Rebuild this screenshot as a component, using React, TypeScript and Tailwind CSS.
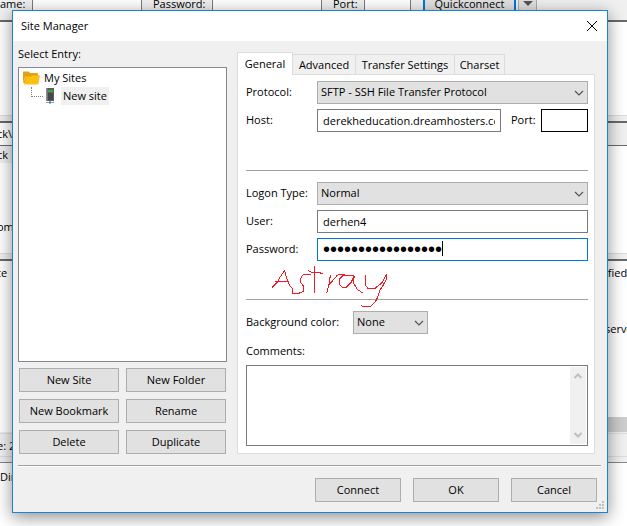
import React, { useState } from "react";

const FONT = "font-['Open_Sans','Noto_Sans',sans-serif]";

const BUTTON =
  "flex h-6 items-center justify-center border border-[#adadad] bg-[#e1e1e1] text-center text-black hover:border-[#0078d7] hover:bg-[#e5f1fb]";

function PushButton({ label }: { label: string }) {
  return (
    <button type="button" className={`${BUTTON} w-full`}>
      {label}
    </button>
  );
}

function Dropdown({ id, options }: { id: string; options: string[] }) {
  return (
    <div className="relative w-full">
      <select
        id={id}
        defaultValue={options[0]}
        className="block h-[23px] w-full appearance-none border border-[#adadad] bg-[#e1e1e1] pr-6 pl-[3px] text-black outline-none"
      >
        {options.map((option) => (
          <option key={option}>{option}</option>
        ))}
      </select>
      <svg
        className="pointer-events-none absolute top-2 right-1 h-2 w-2.5"
        viewBox="0 0 10 8"
        fill="none"
        stroke="#555"
        strokeWidth="1.2"
      >
        <path d="M1 2l4 4 4-4" />
      </svg>
    </div>
  );
}

function Row({
  id,
  label,
  children,
}: {
  id: string;
  label: string;
  children: React.ReactNode;
}) {
  return (
    <div className="flex items-center">
      <label htmlFor={id} className="w-[71px] shrink-0">
        {label}
      </label>
      {children}
    </div>
  );
}

function FolderIcon() {
  return (
    <svg width="17" height="14" viewBox="0 0 17 14">
      <path d="M0 1.5Q0 0.5 1 0.5h4.5l1.5 1.5h7q1 0 1 1V12H0z" fill="#e2a210" />
      <path d="M1 13.5L3.6 5.5H8l1-1h8L15.5 12.5q-.3 1-1.3 1z" fill="#fdc010" />
      <path d="M0 12l2.6-6.5" stroke="#fbe3a0" strokeWidth=".6" />
    </svg>
  );
}

function ServerIcon() {
  return (
    <svg width="10" height="16" viewBox="0 0 10 16">
      <rect x="1" y="0" width="8" height="13" fill="#5c5c5c" />
      <rect x="1" y="0" width="1.5" height="13" fill="#8c8c8c" />
      <rect x="3" y="2" width="5" height="2" fill="#2fae3a" />
      <rect x="3" y="5" width="5" height="7" fill="#484848" />
      <path d="M5 13v2M1 14.5h8" stroke="#9a9a9a" />
      <rect x="4" y="13.5" width="2" height="2" fill="#2f86d8" />
    </svg>
  );
}

function MainWindow() {
  return (
    <div className="flex min-h-screen flex-col bg-white" aria-hidden="true">
      <div className="flex h-5 bg-[#f0f0f0] leading-[7px]">
        <span className="w-8">ame:</span>
        <div className="w-[110px] border-x border-[#7a7a7a] bg-white" />
        <span className="w-[70px] pl-[11px]">Password:</span>
        <div className="w-[110px] border-x border-[#7a7a7a] bg-white" />
        <span className="w-[42px] pl-[11px]">Port:</span>
        <div className="w-[47px] border-x border-[#7a7a7a] bg-white" />
        <div className="ml-3 w-[93px] border-x-2 border-[#0078d7] bg-[#e1e1e1] text-center">
          Quickconnect
        </div>
        <div className="ml-0.5 flex w-[19px] justify-center border-x border-[#adadad] bg-[#e1e1e1]">
          <svg width="10" height="6" viewBox="0 0 10 6">
            <path d="M0 1h10L5 6z" fill="#555" />
          </svg>
        </div>
      </div>
      <div className="h-[95px] border-t-2 border-[#696969]" />
      <div className="h-1.5 border-t border-[#dcdcdc] bg-[#f0f0f0]" />
      <div className="flex h-[25px] border-y border-t-2 border-[#696969]">
        <div className="w-1/2 -indent-[3px] leading-[22px]">ck\</div>
        <div className="w-1/2 bg-[#f0f0f0]" />
      </div>
      <div className="h-[107px] -indent-[3px]">
        <div className="h-[17px] w-1/2 bg-[#f0f0f0] leading-[18px]">ck</div>
        <div className="pt-14 leading-4">om</div>
      </div>
      <div className="h-1.5 border-t border-[#dcdcdc] bg-[#f0f0f0]" />
      <div className="flex h-[158px] justify-between border-t-2 border-[#696969] pt-1 leading-4">
        <span className="-indent-[3px]">te</span>
        <div className="flex w-[22px] flex-col gap-10 whitespace-nowrap">
          <span>ified</span>
          <span>serve</span>
        </div>
      </div>
      <div className="flex h-[15px] justify-end">
        <div className="w-1/2 bg-[#cdcdcd]" />
      </div>
      <div className="h-[30px] bg-[#f0f0f0] pt-px">
        <div className="h-6 border-y border-[#dcdcdc] -indent-[3px] leading-[24px]">e: 2</div>
      </div>
      <div className="grow border-t border-[#828790] pt-1.5 leading-4">Dir</div>
    </div>
  );
}

const TABS = [
  { name: "General", width: "w-14" },
  { name: "Advanced", width: "w-[63px]" },
  { name: "Transfer Settings", width: "w-[99px]" },
  { name: "Charset", width: "w-[50px]" },
];

function Tabs() {
  const [active, setActive] = useState("General");
  return (
    <div role="tablist" className="flex h-[23px] items-end">
      {TABS.map(({ name, width }) => (
        <button
          key={name}
          type="button"
          role="tab"
          aria-selected={active === name}
          onClick={() => setActive(name)}
          className={`${width} flex items-center justify-center whitespace-nowrap border-[#dcdcdc] ${
            active === name
              ? "relative z-10 -mb-px h-[23px] border border-b-0 bg-white"
              : "h-5 border-t border-r bg-[#f0f0f0] pt-px"
          }`}
        >
          {name}
        </button>
      ))}
    </div>
  );
}

function Annotation() {
  return (
    <svg
      className="pointer-events-none absolute top-[187px] left-[30px] h-12 w-[124px]"
      viewBox="0 0 372 144"
      fill="none"
      stroke="#ed1c24"
      strokeWidth="3"
      shapeRendering="crispEdges"
    >
      <path d="M12 77L28 61 33 50 50 25 53 40 60 58 66 73 74 80 75 94H92L107 88 108 75 97 59 100 43 108 37 130 38M20 58H60" />
      <path d="M139 12V92M121 26L128 30 150 31 165 35M187 38L184 64 176 93M185 66L206 42 212 38 232 37" />
      <path d="M259 41L240 40 223 42 214 52V68L222 75H235L250 60 259 41 256 62 268 82 284 93" />
      <path d="M291 38L292 68 300 80H320L342 62 356 36 354 54 344 72 336 84 325 115 308 133H284L279 129" />
    </svg>
  );
}

function GeneralPanel() {
  return (
    <div className="relative flex grow flex-col border border-[#dcdcdc] bg-white pt-1.5 pr-1.5 pb-[7px] pl-2">
      <div className="flex flex-col gap-[5px]">
        <Row id="protocol" label="Protocol:">
          <Dropdown id="protocol" options={["SFTP - SSH File Transfer Protocol", "FTP - File Transfer Protocol"]} />
        </Row>
        <Row id="host" label="Host:">
          <input
            id="host"
            defaultValue="derekheducation.dreamhosters.com"
            className="h-[23px] w-0 grow border border-[#7a7a7a] bg-white px-[5px] outline-none"
          />
          <label htmlFor="port" className="w-10 pl-2.5">
            Port:
          </label>
          <input id="port" className="h-[23px] w-[47px] border border-black bg-white px-[5px] outline-none" />
        </Row>
      </div>
      <hr className="mt-[38px] border-[#a0a0a0]" />
      <div className="mt-[11px] flex flex-col gap-[5px]">
        <Row id="logon" label="Logon Type:">
          <Dropdown id="logon" options={["Normal", "Anonymous", "Interactive"]} />
        </Row>
        <Row id="user" label="User:">
          <input
            id="user"
            defaultValue="derhen4"
            className="h-[23px] w-0 grow border border-[#7a7a7a] bg-white px-[5px] outline-none"
          />
        </Row>
        <Row id="password" label="Password:">
          <div className="relative grow">
            <input
              id="password"
              type="password"
              defaultValue="12345678901234567"
              className="block h-[23px] w-full border border-[#0078d7] bg-white px-[5px] pb-0.5 font-['Liberation_Sans',sans-serif] text-[20px] outline-none"
            />
            <span className="absolute top-[3px] left-[125px] h-[15px] w-px bg-black" />
          </div>
        </Row>
      </div>
      <hr className="mt-[38px] border-[#a0a0a0]" />
      <div className="mt-[11px] flex items-center">
        <label htmlFor="color" className="w-[107px] whitespace-nowrap">
          Background color:
        </label>
        <div className="w-[75px]">
          <Dropdown id="color" options={["None", "Red", "Green", "Blue"]} />
        </div>
      </div>
      <label htmlFor="comments" className="mt-2 leading-[18px]">
        Comments:
      </label>
      <div className="mt-[5px] flex grow border border-[#7a7a7a] p-px">
        <textarea id="comments" className="grow resize-none bg-white px-1 outline-none" />
        <div className="flex w-4 flex-col items-center justify-between bg-[#f0f0f0] py-1.5">
          <svg width="8" height="6" viewBox="0 0 8 6" fill="none" stroke="#bfbfbf" strokeWidth="2">
            <path d="M0.5 5L4 1.5 7.5 5" />
          </svg>
          <svg width="8" height="6" viewBox="0 0 8 6" fill="none" stroke="#bfbfbf" strokeWidth="2">
            <path d="M0.5 1L4 4.5 7.5 1" />
          </svg>
        </div>
      </div>
      <Annotation />
    </div>
  );
}

function SiteTree() {
  return (
    <div className="flex w-[209px] shrink-0 flex-col">
      <div className="mb-1 leading-[18px]">Select Entry:</div>
      <div className="grow border border-[#828790] bg-white pt-px pl-1" role="tree">
        <div className="flex h-[18px] items-center" role="treeitem">
          <FolderIcon />
          <span className="pl-1">My Sites</span>
        </div>
        <div className="flex h-[18px] items-center pl-2" role="treeitem">
          <div className="h-2.5 w-3 self-start border-b border-l border-dotted border-[#808080]" />
          <div className="flex w-[18px] pl-0.5">
            <ServerIcon />
          </div>
          <span className="bg-[#f0f0f0] px-0.5 leading-[18px]">New site</span>
        </div>
      </div>
      <div className="mx-px mt-1.5 grid grid-cols-2 gap-[7px]">
        {["New Site", "New Folder", "New Bookmark", "Rename", "Delete", "Duplicate"].map((label) => (
          <PushButton key={label} label={label} />
        ))}
      </div>
    </div>
  );
}

function SizeGrip() {
  return (
    <svg className="absolute right-0.5 bottom-0.5" width="9" height="9" viewBox="0 0 9 9" fill="#bfbfbf">
      <path d="M6 0h2v2H6zM3 3h2v2H3zM6 3h2v2H6zM0 6h2v2H0zM3 6h2v2H3zM6 6h2v2H6z" />
    </svg>
  );
}

export default function App() {
  return (
    <div className={`relative min-h-screen overflow-hidden text-[11px] text-black ${FONT}`}>
      <MainWindow />
      <div
        role="dialog"
        aria-labelledby="dialog-title"
        className="absolute top-2.5 right-[19px] bottom-[13px] left-3 flex flex-col border border-[#1883d7] bg-[#f0f0f0] shadow-[0_4px_16px_rgba(0,0,0,0.45)]"
      >
        <header className="flex h-[30px] items-center justify-between bg-white pr-2.5 pl-2">
          <h1 id="dialog-title">Site Manager</h1>
          <button type="button" aria-label="Close">
            <svg width="10" height="10" viewBox="0 0 10 10" stroke="#000">
              <path d="M0 0l10 10M10 0L0 10" />
            </svg>
          </button>
        </header>
        <div className="flex grow gap-2.5 pt-1 pr-3 pl-[5px]">
          <SiteTree />
          <div className="flex grow flex-col pt-1.5">
            <Tabs />
            <GeneralPanel />
          </div>
        </div>
        <div className="mt-[11px] mr-1.5 ml-[5px] h-0.5 border-t border-[#a0a0a0] bg-white" role="separator" />
        <div className="mt-[11px] mr-2.5 mb-2.5 flex justify-end gap-3">
          {["Connect", "OK", "Cancel"].map((label) => (
            <div key={label} className="w-[86px]">
              <PushButton label={label} />
            </div>
          ))}
        </div>
        <SizeGrip />
      </div>
    </div>
  );
}
